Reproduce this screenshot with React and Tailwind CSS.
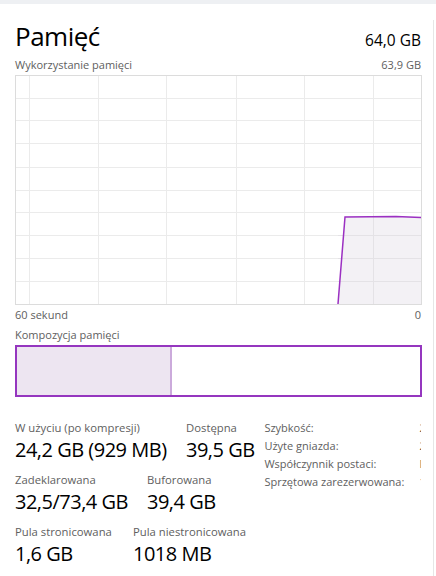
const HLINES = [23, 45, 68, 92, 115, 137, 160, 183, 206];
const VLINES = [14, 83, 151, 221, 289, 358];

const UsageChart = () => (
  <svg width="407" height="230" viewBox="0 0 407 230" className="block">
    <rect x="0.5" y="0.5" width="406" height="229" fill="#ffffff" stroke="#dcdcdc" />
    {HLINES.map((y) => (
      <line key={`h${y}`} x1="1" x2="406" y1={y + 0.5} y2={y + 0.5} stroke="#ebebeb" />
    ))}
    {VLINES.map((x) => (
      <line key={`v${x}`} x1={x + 0.5} x2={x + 0.5} y1="1" y2="229" stroke="#ebebeb" />
    ))}
    <polygon points="323,229 330,142 381,141.5 406,142.5 406,229" fill="#f2f0f4" fillOpacity="0.9" />
    {HLINES.filter((y) => y > 142).map((y) => (
      <line key={`hh${y}`} x1="323" x2="406" y1={y + 0.5} y2={y + 0.5} stroke="#e4e2e6" />
    ))}
    <line x1="358.5" x2="358.5" y1="142" y2="229" stroke="#e4e2e6" />
    <polyline points="323,229 330,142 381,141.5 406,142.5" fill="none" stroke="#9b30c2" strokeWidth="1.5" />
  </svg>
);

const Stat = ({ label, value, className = '' }) => (
  <div className={className}>
    <div className="text-[11.3px] leading-[18px] text-[#606060] whitespace-nowrap">{label}</div>
    <div className="text-[20px] leading-[26px] tracking-[-0.5px] text-black whitespace-nowrap">{value}</div>
  </div>
);

const specs = [
  ['Szybkość:', '2400 MHz'],
  ['Użyte gniazda:', '2 z 4'],
  ['Współczynnik postaci:', 'DIMM'],
  ['Sprzętowa zarezerwowana:', '143 MB'],
];

export default function App() {
  return (
    <div
      className="w-[436px] h-[576px] bg-white overflow-hidden"
      style={{ fontFamily: '"Open Sans", "Noto Sans", sans-serif' }}
    >
      <div className="h-[4px] bg-[#eef0f3]" />
      <div className="w-[434px] h-[572px] border-r border-[#e6e6e6] pl-[15px] pr-[12px]">
        {/* header */}
        <div className="flex items-baseline justify-between mt-[16px] h-[32px]">
          <h1 className="text-[26px] leading-[32px] tracking-[-0.5px] text-black">Pamięć</h1>
          <span className="text-[15.5px] leading-[32px] text-black">64,0 GB</span>
        </div>
        <div className="flex justify-between mt-[5px] text-[11px] leading-[16px] text-[#606060]">
          <span>Wykorzystanie pamięci</span>
          <span>63,9 GB</span>
        </div>

        <div className="mt-[2px]">
          <UsageChart />
        </div>

        <div className="flex justify-between mt-[2px] text-[11px] leading-[16px] text-[#606060]">
          <span>60 sekund</span>
          <span>0</span>
        </div>
        <div className="mt-[4px] text-[11px] leading-[16px] text-[#606060]">Kompozycja pamięci</div>

        {/* composition bar */}
        <div className="mt-[2px] w-[407px] h-[52px] border-2 border-[#9536bf] flex">
          <div className="w-[155px] h-full bg-[#ede5f1] border-r-2 border-[#cbaadb]" />
          <div className="flex-1 bg-white" />
        </div>

        {/* stats */}
        <div className="mt-[22px] flex">
          <div className="w-[250px] flex flex-col gap-[8px]">
            <div className="flex">
              <Stat className="w-[171px]" label="W użyciu (po kompresji)" value="24,2 GB (929 MB)" />
              <Stat label="Dostępna" value="39,5 GB" />
            </div>
            <div className="flex">
              <Stat className="w-[132px]" label="Zadeklarowana" value="32,5/73,4 GB" />
              <Stat label="Buforowana" value="39,4 GB" />
            </div>
            <div className="flex">
              <Stat className="w-[118px]" label="Pula stronicowana" value="1,6 GB" />
              <Stat label="Pula niestronicowana" value="1018 MB" />
            </div>
          </div>
          <div className="w-[157px] overflow-hidden">
            {specs.map(([k, v]) => (
              <div key={k} className="flex text-[11px] leading-[18px] whitespace-nowrap">
                <span className="w-[155px] shrink-0 text-[#606060]">{k}</span>
                <span className="text-[#555]">{v}</span>
              </div>
            ))}
          </div>
        </div>
      </div>
    </div>
  );
}
